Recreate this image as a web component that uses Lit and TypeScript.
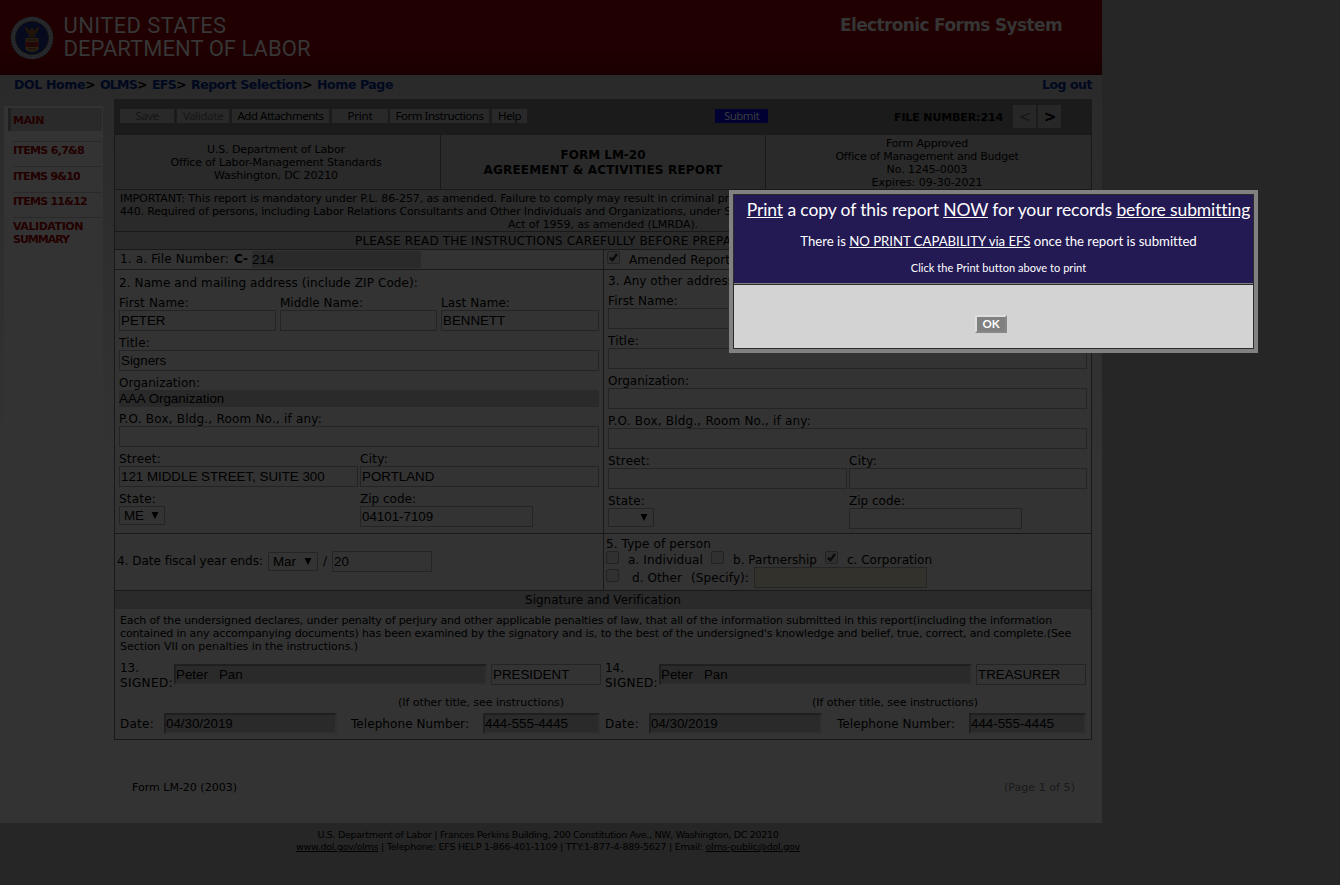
import { LitElement, html, css, svg } from "lit";
import { customElement } from "lit/decorators.js";

/** Text set to a known measure: tracking is derived from its natural width. */
const t = (content: unknown, width: number, cls = "") =>
  html`<span class="t ${cls}" data-w=${width}>${content}</span>`;

const tick = html`<svg width="11" height="11" viewBox="0 0 11 11"><path d="M2 5.6 4.4 8.2 9 2" fill="none" stroke="#0b0b0b" stroke-width="2.4"/></svg>`;
const box = (on = false) => html`<span class="check">${on ? tick : ""}</span>`;
const arrow = html`<svg class="arrow" width="8" height="7" viewBox="0 0 8 7"><path d="M0.5 0H7.5L4 7Z" fill="#000"/></svg>`;
const field = (value = "", cls = "") => html`<span class="field ${cls}">${value}</span>`;

const seal = svg`<svg class="seal" width="44" height="44" viewBox="0 0 44 44">
  <circle cx="22" cy="22" r="21.5" fill="#1d1f22"/>
  <circle cx="22" cy="22" r="20.4" fill="#2b2d31"/>
  <circle cx="22" cy="22" r="18.6" fill="none" stroke="#1f2128" stroke-width="2" stroke-dasharray="1.6 1.3"/>
  <circle cx="22" cy="22" r="16.6" fill="#050a1f" stroke="#15140f" stroke-width="1"/>
  <path d="M14.5 10.5c2 .3 4 2 5.2 4.1l1.3-2.6 1-.6 1 .6 1.3 2.6c1.2-2.1 3.2-3.8 5.2-4.1-.2 3.6-2 6.5-4.7 8l1.4 2.6h-8.4l1.4-2.600c-2.700-1.500-4.500-4.400-4.700-8Z" fill="#1d1509"/>
  <path d="M15.500 22h13v11c0 1.500-1.500 2-3 2.300-1.600.2-2.700.7-3.500 1.500-.8-.8-1.900-1.300-3.500-1.500-1.500-.3-3-.8-3-2.300Z" fill="#2a2011"/>
  <path d="M15.500 26h13v5h-13Z" fill="#290508"/>
  <path d="M17 24h10M18 33h8M22 26v5M18 28.500h8" stroke="#150d06" stroke-width="1"/>
</svg>`;

@customElement("app-root")
export class AppRoot extends LitElement {
  static styles = css`
    :host { display: block; position: relative; width: 1340px; height: 885px; overflow: hidden; background: #262626; color: #000; font: 12px/15px "DejaVu Sans", sans-serif; }
    * { box-sizing: border-box; }
    .t { display: inline-block; white-space: nowrap; }
    .page { width: 1102px; height: 823px; background: linear-gradient(#2a2a2a 75px, #333 460px); }
    .banner { height: 75px; padding: 15px 40px 0 10px; background: linear-gradient(#200000 50px, #190000); display: flex; }
    .seal { display: block; margin-top: 1px; }
    .dept { margin: -1px 0 0 9.5px; font: 22px/23px Roboto, sans-serif; color: #363636; display: flex; flex-direction: column; align-items: flex-start; }
    .efs { margin-left: auto; font: bold 17px/20px "DejaVu Sans", sans-serif; color: #353535; }
    .crumbs { height: 24px; padding: 2px 10px 0 14px; display: flex; font-weight: bold; font-size: 12.5px; line-height: 16px; color: #00081f; }
    .crumbs b { color: #000; margin-right: 6px; width: 9px; display: inline-block; }
    .crumbs .out { margin-left: auto; }
    .body { display: flex; align-items: flex-start; }
    .side { width: 99px; height: 349px; margin: 7px 11px 0 4px; padding: 2px 1px 0 4px; background: #333; font: bold 11px/13px "DejaVu Sans", sans-serif; color: #230000; }
    .main { height: 23px; border-left: 3px solid #1f1f1f; background: #2a2a2a; padding: 6px 0 0 2px; margin-bottom: 10px; }
    .item { margin-left: 5px; border-top: 1px solid #292929; height: 25px; padding-top: 2px; }
    .item.tall { height: 26px; padding-top: 3px; }
    .form { width: 978px; border: 1px solid #191919; border-top: 0; height: 641px; background: #333; }
    .bar { height: 36px; margin: 0 -1px; background: #1b1b1b; display: flex; padding: 10px 0 0 6px; font: 11.5px/14px "Noto Sans", sans-serif; }
    .btn { height: 14px; margin-right: 3px; background: #292929; text-align: center; }
    .dim { color: #161616; }
    .b1 { width: 54px; } .b2 { width: 52px; } .b3 { width: 97px; } .b4 { width: 56px; } .b5 { width: 99px; margin-left: -1px; } .b6 { width: 35px; }
    .submit { width: 53px; margin-left: 185px; background: #000033; color: #3c3c3c; }
    .num { margin-left: 123px; font: bold 11px/17px "DejaVu Sans", sans-serif; }
    .nav { width: 23px; height: 23px; margin: -4px 2px 0 0; background: #272727; font: bold 15px/25px "DejaVu Sans", sans-serif; text-align: center; padding-left: 1px; }
    .nav.first { margin-left: 10px; color: #151515; font-weight: normal; }
    .titles { height: 55px; display: grid; grid-template-columns: 325px 325px 326px; background: #2a2a2a; border-bottom: 1px solid #191919; font-size: 11px; line-height: 13px; }
    .titles div { display: flex; flex-direction: column; align-items: center; padding: 8px 3px 0 0; }
    .titles div + div { border-left: 1px solid #191919; }
    .titles .mid { font: bold 12px/15px "DejaVu Sans", sans-serif; padding: 13px 0 0; }
    .titles .last { padding: 2px 3px 0 0; }
    .notice { height: 42px; padding: 2px 0 0 5px; background: #2a2a2a; border-bottom: 1px solid #191919; font-size: 11px; line-height: 13px; display: flex; flex-direction: column; align-items: flex-start; }
    .notice .third { margin-left: 388px; }
    .read { height: 18px; padding: 2px 0 0 240px; background: #2a2a2a; border-bottom: 1px solid #191919; }
    .pair { display: grid; grid-template-columns: 489px 487px; border-bottom: 1px solid #191919; }
    .pair > :first-child { border-right: 1px solid #191919; }
    .file { height: 19px; display: flex; padding: 1px 0 0 5px; line-height: 17px; }
    .file b { margin: 0 4px 0 5px; }
    .fnum { width: 169px; height: 17px; background: #2a2a2a; font: 13.33px/17px "Liberation Sans", sans-serif; }
    .amend { display: flex; padding: 1px 0 0 3px; line-height: 19px; }
    .amend .t { margin-left: 9px; height: 17px; }
    .check { width: 13px; height: 13px; border: 1px solid #222; border-radius: 2px; background: #303030; display: inline-block; flex: none; }
    .check svg { display: block; }
    .addr { height: 263px; padding: 6px 4px 0 4px; }
    .addr.alt { padding-top: 4px; }
    .head { height: 19px; }
    .cols { display: grid; grid-template-columns: 157px 157px 1fr; gap: 4px; }
    .cols.two { grid-template-columns: 239px 1fr; gap: 2px; }
    .cell { height: 40px; min-width: 0; }
    .cell.short { height: 36px; }
    .lab { height: 15px; display: block; line-height: 17px; }
    .field { display: block; height: 21px; border: 1px solid #242424; padding-left: 1px; font: 13.33px/19px "Liberation Sans", sans-serif; white-space: pre; overflow: hidden; }
    .field.flat { border: 0; background: #2a2a2a; height: 17px; line-height: 17px; padding: 0; }
    .field.zip { width: 173px; }
    .field.tan { width: 173px; background: #32312c; margin-left: 5px; }
    .field.yr { width: 100px; margin-left: 4px; }
    .sel { display: flex; width: 46px; height: 19px; border: 1px solid #242424; border-radius: 1px; padding-left: 4px; font: 13.33px/17px "Liberation Sans", sans-serif; justify-content: space-between; }
    .sel.mon { width: 50px; margin: 0 5px; }
    .arrow { margin: 5px 5px 0 0; }
    .short-row { height: 57px; }
    .fiscal { display: flex; align-items: center; padding: 0 0 2px 2px; height: 56px; }
    .person { padding: 2px 0 0 2px; height: 56px; }
    .kind { height: 15px; line-height: 17px; }
    .line { display: flex; }
    .l2 { height: 16px; line-height: 18px; }
    .l2 .check + .t { margin: 0 8px 0 9px; }
    .l3 { line-height: 22px; height: 21px; }
    .l3 .check { margin: 2px 13px 0 0; }
    .l3 .t + .t { margin-left: 9px; }
    .sig { height: 18px; background: #2a2a2a; text-align: center; line-height: 19px; }
    .decl { font-size: 11px; line-height: 13px; padding: 5px 0 0 5px; height: 51px; display: flex; flex-direction: column; align-items: flex-start; }
    .signs { display: grid; grid-template-columns: 486px 490px; }
    .sign { padding: 1px 0 0 5px; }
    .sign.right { padding-left: 4px; }
    .sign .name { height: 35px; display: flex; }
    .sign .who { width: 54px; }
    .inset { border: 2px solid; border-color: #1f1f1f #303030 #303030 #1f1f1f; background: #2a2a2a; line-height: 17px; padding-left: 0; }
    .w313 { width: 313px; margin: 3px 4px 0 0; }
    .w110 { width: 110px; margin-top: 3px; }
    .date { width: 173px; margin: 0 14px 0 10px; }
    .right .date { margin-right: 15px; }
    .phone { width: 117px; margin-left: 14px; }
    .hint { font-size: 11px; line-height: 13px; height: 17px; padding-left: 278px; }
    .right .hint { padding-left: 207px; }
    .tel { display: flex; line-height: 23px; height: 21px; }
    .foot { display: flex; justify-content: space-between; font-size: 11px; line-height: 13px; margin: 41px 27px 0 132px; }
    .page-no { color: #191919; }
    .site { width: 1096px; padding-top: 6px; display: flex; flex-direction: column; align-items: center; font-size: 9.5px; line-height: 12px; }
    u { text-underline-offset: 1px; }
    .modal { position: absolute; left: 729px; top: 190px; width: 529px; height: 163px; border: 4px solid #818181; background: #2b2b2b; padding: 1px; color: #fff; font-family: Lato, sans-serif; }
    .top { height: 88px; background: #231a54; display: flex; flex-direction: column; align-items: center; padding-left: 10px; }
    .m1 { font-size: 17.5px; line-height: 22px; margin-top: 4px; }
    .m2 { font-size: 13.2px; line-height: 18px; margin-top: 11px; }
    .m3 { font-size: 11px; line-height: 14px; margin-top: 11px; }
    .bottom { height: 65px; border-top: 1px solid #818181; background: #d3d3d3; box-shadow: inset 0 1px #2b2b2b; display: flex; justify-content: center; align-items: flex-start; padding: 31px 5px 0 0; }
    .ok { width: 32px; height: 18px; border: 2px solid; border-color: #dedede #888 #888 #dedede; background: #808080; font: bold 11.5px/14px Lato, sans-serif; text-align: center; color: #fff; }
  `;

  firstUpdated() {
    this.renderRoot.querySelectorAll<HTMLElement>(".t").forEach((el) => {
      const target = Number(el.dataset.w);
      const range = document.createRange();
      range.selectNodeContents(el);
      const natural = range.getBoundingClientRect().width;
      const count = (el.textContent ?? "").length;
      el.style.letterSpacing = `${(target - natural) / count}px`;
    });
  }

  private cell(label: string, w: number, body: unknown, cls = "") {
    return html`<div class="cell ${cls}"><span class="lab">${t(label, w)}</span>${body}</div>`;
  }

  private address(title: unknown, v: string[], alt = false) {
    return html`<div class="addr ${alt ? "alt" : ""}">
      <div class="head">${title}</div>
      ${alt
        ? this.cell("First Name:", 70, field(v[0]))
        : html`<div class="cols">${this.cell("First Name:", 70, field(v[0]))}${this.cell("Middle Name:", 83, field())}${this.cell("Last Name:", 69, field(v[1]))}</div>`}
      ${this.cell("Title:", 31, field(v[2]))}
      ${this.cell("Organization:", 81, field(v[3], alt ? "" : "flat"), alt ? "" : "short")}
      ${this.cell("P.O. Box, Bldg., Room No., if any:", 203, field())}
      <div class="cols two">${this.cell("Street:", 42, field(v[4]))}${this.cell("City:", 28, field(v[5]))}</div>
      <div class="cols two">${this.cell("State:", 37, html`<span class="sel">${v[6]}<i></i>${arrow}</span>`)}${this.cell("Zip code:", 56, field(v[7], "zip"))}</div>
    </div>`;
  }

  private signer(n: string, title: string, cls = "") {
    return html`<div class="sign ${cls}">
      <div class="name"><span class="who">${t(n, 19)}<br />${t("SIGNED:", 53)}</span>${field("Peter   Pan", "inset w313")}${field(title, "w110")}</div>
      <div class="hint">${t("(If other title, see instructions)", 166)}</div>
      <div class="tel">${t("Date:", 34)}${field("04/30/2019", "inset date")}${t("Telephone Number:", 118)}${field("444-555-4445", "inset phone")}</div>
    </div>`;
  }

  render() {
    return html`
      <div class="page">
        <div class="banner">${seal}
          <div class="dept">${t("UNITED STATES", 163)}${t("DEPARTMENT OF LABOR", 247)}</div>
          <div class="efs">${t("Electronic Forms System", 222)}</div>
        </div>
        <div class="crumbs">${t("DOL Home", 71)}<b>&gt;</b>${t("OLMS", 37)}<b>&gt;</b>${t("EFS", 24)}<b>&gt;</b>${t("Report Selection", 111)}<b>&gt;</b>${t("Home Page", 76)}<span class="out">${t("Log out", 50)}</span></div>
        <div class="body">
          <div class="side">
            <div class="main">${t("MAIN", 31)}</div>
            <div class="item">${t("ITEMS 6,7&8", 71)}</div>
            <div class="item tall">${t("ITEMS 9&10", 67)}</div>
            <div class="item">${t("ITEMS 11&12", 74)}</div>
            <div class="item">${t("VALIDATION", 70)}<br />${t("SUMMARY", 56)}</div>
          </div>
          <div class="form">
            <div class="bar">
              <span class="btn b1 dim">${t("Save", 23)}</span><span class="btn b2 dim">${t("Validate", 40)}</span><span class="btn b3">${t("Add Attachments", 86)}</span><span class="btn b4">${t("Print", 25)}</span><span class="btn b5">${t("Form Instructions", 88)}</span><span class="btn b6">${t("Help", 23)}</span>
              <span class="btn submit">${t("Submit", 35)}</span>
              <span class="num">${t("FILE NUMBER:214", 109)}</span>
              <span class="nav first">&lt;</span><span class="nav">&gt;</span>
            </div>
            <div class="titles">
              <div>${t("U.S. Department of Labor", 138)}${t("Office of Labor-Management Standards", 211)}${t("Washington, DC 20210", 124)}</div>
              <div class="mid">${t("FORM LM-20", 85)}${t("AGREEMENT & ACTIVITIES REPORT", 239)}</div>
              <div class="last">${t("Form Approved", 82)}${t("Office of Management and Budget", 183)}${t("No. 1245-0003", 81)}${t("Expires: 09-30-2021", 111)}</div>
            </div>
            <div class="notice">
              ${t("IMPORTANT: This report is mandatory under P.L. 86-257, as amended. Failure to comply may result in criminal pr", 609)}
              ${t("440. Required of persons, including Labor Relations Consultants and Other Individuals and Organizations, under S", 611)}
              ${t("Act of 1959, as amended (LMRDA).", 190, "third")}
            </div>
            <div class="read">${t("PLEASE READ THE INSTRUCTIONS CAREFULLY BEFORE PREPA", 376)}</div>
            <div class="pair">
              <div class="file">${t("1. a. File Number:", 109)}<b>${t("C-", 14)}</b><span class="fnum">214</span></div>
              <div class="amend">${box(true)}${t("Amended Report", 101)}</div>
            </div>
            <div class="pair">
              ${this.address(t("2. Name and mailing address (include ZIP Code):", 299), ["PETER", "BENNETT", "Signers", "AAA Organization", "121 MIDDLE STREET, SUITE 300", "PORTLAND", "ME", "04101-7109"])}
              ${this.address(t("3. Any other address", 126), ["", "", "", "", "", "", "", ""], true)}
            </div>
            <div class="pair short-row">
              <div class="fiscal">${t("4. Date fiscal year ends:", 146)}<span class="sel mon">Mar${arrow}</span>${t("/", 5)}${field("20", "yr")}</div>
              <div class="person">
                <div class="kind">${t("5. Type of person", 105)}</div>
                <div class="line l2">${box()}${t("a. Individual", 75)}${box()}${t("b. Partnership", 84)}${box(true)}${t("c. Corporation", 85)}</div>
                <div class="line l3">${box()}${t("d. Other", 50)}${t("(Specify):", 58)}${field("", "tan")}</div>
              </div>
            </div>
            <div class="sig">${t("Signature and Verification", 156)}</div>
            <div class="decl">
              ${t("Each of the undersigned declares, under penalty of perjury and other applicable penalties of law, that all of the information submitted in this report(including the information", 932)}
              ${t("contained in any accompanying documents) has been examined by the signatory and is, to the best of the undersigned's knowledge and belief, true, correct, and complete.(See", 951)}
              ${t("Section VII on penalties in the instructions.)", 238)}
            </div>
            <div class="signs">${this.signer("13.", "PRESIDENT")}${this.signer("14.", "TREASURER", "right")}</div>
          </div>
        </div>
        <div class="foot">${t("Form LM-20 (2003)", 105)}<span class="page-no">${t("(Page 1 of 5)", 71)}</span></div>
      </div>
      <div class="site">
        ${t("U.S. Department of Labor | Frances Perkins Building, 200 Constitution Ave., NW, Washington, DC 20210", 461)}
        ${t(html`<u>www.dol.gov/olms</u> | Telephone: EFS HELP 1-866-401-1109 | TTY:1-877-4-889-5627 | Email: <u>olms-public@dol.gov</u>`, 504)}
      </div>
      <div class="modal">
        <div class="top">
          ${t(html`<u>Print</u> a copy of this report <u>NOW</u> for your records <u>before submitting</u>`, 503, "m1")}
          ${t(html`There is <u>NO PRINT CAPABILITY via EFS</u> once the report is submitted`, 396, "m2")}
          ${t("Click the Print button above to print", 175, "m3")}
        </div>
        <div class="bottom"><span class="ok">OK</span></div>
      </div>`;
  }
}
